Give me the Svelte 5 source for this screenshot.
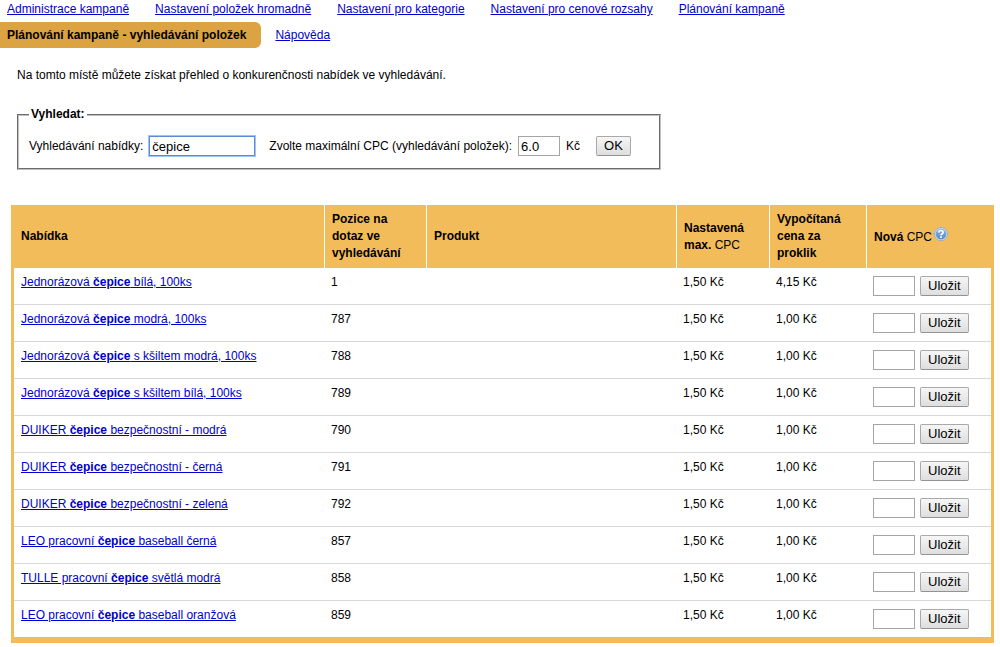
<script lang="ts">
	interface Offer {
		before: string;
		after: string;
		position: number;
		maxCpc: string;
		price: string;
	}

	const links = [
		'Administrace kampaně',
		'Nastavení položek hromadně',
		'Nastavení pro kategorie',
		'Nastavení pro cenové rozsahy',
		'Plánování kampaně'
	];

	const offers: Offer[] = [
		{ before: 'Jednorázová', after: 'bílá, 100ks', position: 1, maxCpc: '1,50', price: '4,15' },
		{ before: 'Jednorázová', after: 'modrá, 100ks', position: 787, maxCpc: '1,50', price: '1,00' },
		{ before: 'Jednorázová', after: 's kšiltem modrá, 100ks', position: 788, maxCpc: '1,50', price: '1,00' },
		{ before: 'Jednorázová', after: 's kšiltem bílá, 100ks', position: 789, maxCpc: '1,50', price: '1,00' },
		{ before: 'DUIKER', after: 'bezpečnostní - modrá', position: 790, maxCpc: '1,50', price: '1,00' },
		{ before: 'DUIKER', after: 'bezpečnostní - černá', position: 791, maxCpc: '1,50', price: '1,00' },
		{ before: 'DUIKER', after: 'bezpečnostní - zelená', position: 792, maxCpc: '1,50', price: '1,00' },
		{ before: 'LEO pracovní', after: 'baseball černá', position: 857, maxCpc: '1,50', price: '1,00' },
		{ before: 'TULLE pracovní', after: 'světlá modrá', position: 858, maxCpc: '1,50', price: '1,00' },
		{ before: 'LEO pracovní', after: 'baseball oranžová', position: 859, maxCpc: '1,50', price: '1,00' }
	];

	let query = $state('čepice');
	let maxCpc = $state('6.0');
</script>

<nav>
	<div class="nav-row">
		{#each links as link}
			<a href="#top">{link}</a>
		{/each}
	</div>
	<div class="nav-row second">
		<strong class="current">Plánování kampaně - vyhledávání položek</strong>
		<a href="#help">Nápověda</a>
	</div>
</nav>

<main>
	<p>Na tomto místě můžete získat přehled o konkurenčnosti nabídek ve vyhledávání.</p>

	<form onsubmit={(event) => event.preventDefault()}>
		<fieldset>
			<legend>Vyhledat:</legend>
			<div class="fields">
				<label for="query">Vyhledávání nabídky:</label>
				<input id="query" class="query" type="text" bind:value={query} />
				<label for="max-cpc">Zvolte maximální CPC (vyhledávání položek):</label>
				<input id="max-cpc" class="short" type="text" bind:value={maxCpc} />
				<span class="unit">Kč</span>
				<button type="submit">OK</button>
			</div>
		</fieldset>
	</form>

	<table>
		<colgroup>
			<col class="col-offer" />
			<col class="col-position" />
			<col />
			<col class="col-max" />
			<col class="col-price" />
			<col class="col-new" />
		</colgroup>
		<thead>
			<tr>
				<th>Nabídka</th>
				<th>Pozice na dotaz ve vyhledávání</th>
				<th>Produkt</th>
				<th>Nastavená<br />max. <span class="plain">CPC</span></th>
				<th>Vypočítaná cena za proklik</th>
				<th>
					Nová <span class="plain">CPC</span><svg class="help" viewBox="0 0 14 14" role="img" aria-label="Nápověda">
						<defs>
							<linearGradient id="help-fill" x1="0" y1="0" x2="0" y2="1">
								<stop offset="0" stop-color="#94b8e2" />
								<stop offset="1" stop-color="#5586c6" />
							</linearGradient>
						</defs>
						<circle cx="7" cy="7" r="6.5" fill="#dce8f4" stroke="#8fabd0" />
						<circle cx="7" cy="7" r="5.4" fill="url(#help-fill)" />
						<path d="M4.8 5.6C4.8 2.9 9.2 2.9 9.2 5.4C9.2 6.8 7 6.7 7 8.4" fill="none" stroke="#fff" stroke-width="1.6" />
						<rect x="6.1" y="9.3" width="1.8" height="1.7" fill="#fff" />
					</svg>
				</th>
			</tr>
		</thead>
		<tbody>
			{#each offers as offer}
				<tr>
					<td><a href="#offer">{offer.before} <b>čepice</b> {offer.after}</a></td>
					<td>{offer.position}</td>
					<td></td>
					<td>{offer.maxCpc} Kč</td>
					<td>{offer.price} Kč</td>
					<td class="edit">
						<div class="edit-row">
							<input class="short" type="text" aria-label="Nová CPC" />
							<button type="button">Uložit</button>
						</div>
					</td>
				</tr>
			{/each}
		</tbody>
	</table>
</main>

<style>
	:global(body) {
		background: #fff;
		color: #000;
		font: 12px/17px 'Liberation Sans', Arial, sans-serif;
	}

	nav {
		padding-top: 1px;
	}

	a {
		color: #00c;
	}

	.nav-row {
		display: flex;
		align-items: center;
		gap: 26px;
		padding-left: 7px;
	}

	.nav-row.second {
		gap: 14px;
		margin-top: 4px;
		padding-left: 0;
	}

	.current {
		padding: 5px 15px 4px 7px;
		border-radius: 0 6px 6px 0;
		background: #dba341;
	}

	main {
		padding: 19px 6px 0 11px;
	}

	p {
		margin: 0 6px 22px;
	}

	fieldset {
		box-sizing: border-box;
		width: 644px;
		max-width: 100%;
		margin: 0 6px 35px;
		padding: 13px 10px 12px;
		border: 2px groove #c0c0c0;
	}

	legend {
		padding: 0 2px;
		font-weight: bold;
	}

	.fields {
		display: flex;
		align-items: center;
		gap: 6px;
	}

	input,
	button {
		box-sizing: border-box;
		height: 20px;
		font: 13px/16px 'Liberation Sans', Arial, sans-serif;
		color: #000;
	}

	input {
		padding: 1px 2px;
		border: 1px solid #a5a5a5;
		background: #fff;
	}

	.short {
		width: 42px;
	}

	.query {
		width: 106px;
		margin-right: 8px;
		border-color: #5b8ad8;
		outline: 1px solid #a3c3f7;
	}

	.unit {
		margin-right: 10px;
	}

	button {
		padding: 0 7px;
		border: 1px solid #a9a9a9;
		border-bottom-color: #939393;
		border-radius: 2px;
		background: linear-gradient(#f6f6f6, #dedede);
	}

	table {
		width: 100%;
		table-layout: fixed;
		border: 3px solid #f3bc5b;
		border-top: 0;
		border-bottom-width: 6px;
		border-spacing: 0;
	}

	.col-offer {
		width: 311px;
	}

	.col-position {
		width: 102px;
	}

	.col-max {
		width: 93px;
	}

	.col-price {
		width: 97px;
	}

	.col-new {
		width: 124px;
	}

	th {
		padding: 6px 7px;
		border-right: 1px solid #fff;
		background: #f3bc5b;
		text-align: left;
	}

	th:last-child {
		border-right: 0;
	}

	.plain {
		font-weight: normal;
	}

	.help {
		width: 14px;
		height: 14px;
		margin-left: 2px;
	}

	td {
		box-sizing: border-box;
		height: 37px;
		padding: 6px;
		border-bottom: 1px solid #d8d8d8;
		vertical-align: top;
	}

	td:first-child {
		padding-left: 7px;
	}

	.edit {
		padding: 8px 6px;
	}

	.edit-row {
		display: flex;
		gap: 5px;
	}

	tr:last-child td {
		height: 36px;
		border-bottom: 0;
	}
</style>
